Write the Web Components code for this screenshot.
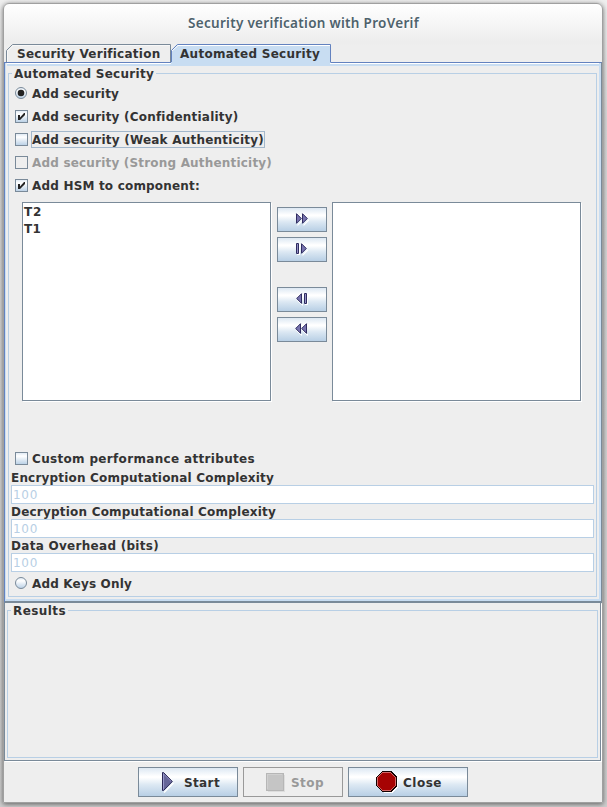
<!DOCTYPE html>
<html lang="en">
<head>
<meta charset="utf-8">
<title>Security verification with ProVerif</title>
<style>
html,body{margin:0;height:100%;overflow:hidden}
body{background:#cfcfcf;font:bold 12px/15px "DejaVu Sans",sans-serif;color:#333;--dark:#7a8a99;--light:#b8cfe5;--blue:#6382bf;--tab:#c8ddf2}
</style>
</head>
<body>
<dialog-window>
  <fit-text slot="title" w="230">Security verification with ProVerif</fit-text>
  <tab-strip slot="tabs"></tab-strip>
  <tab-panel slot="panel">
    <titled-group><fit-text slot="title" w="139">Automated Security</fit-text>
      <option-row kind="radio" checked><fit-text w="86">Add security</fit-text></option-row>
      <option-row kind="check" checked><fit-text w="205">Add security (Confidentiality)</fit-text></option-row>
      <option-row kind="check" focused><fit-text w="231">Add security (Weak Authenticity)</fit-text></option-row>
      <option-row kind="check" disabled><fit-text w="239">Add security (Strong Authenticity)</fit-text></option-row>
      <option-row kind="check" checked><fit-text w="167">Add HSM to component:</fit-text></option-row>
      <list-mover></list-mover>
      <option-row kind="check"><fit-text w="222">Custom performance attributes</fit-text></option-row>
      <value-field><fit-text slot="label" w="262">Encryption Computational Complexity</fit-text><fit-text w="24">100</fit-text></value-field>
      <value-field><fit-text slot="label" w="264">Decryption Computational Complexity</fit-text><fit-text w="24">100</fit-text></value-field>
      <value-field><fit-text slot="label" w="147">Data Overhead (bits)</fit-text><fit-text w="24">100</fit-text></value-field>
      <option-row kind="radio"><fit-text w="99">Add Keys Only</fit-text></option-row>
    </titled-group>
  </tab-panel>
  <results-pane slot="results"><titled-group style="--up:-2px"><fit-text slot="title" w="52">Results</fit-text></titled-group></results-pane>
  <push-button slot="actions" style="--w:100px;--gap:10px;--pad:23px">
    <svg slot="icon" width="12" height="21" viewBox="0 0 12 21"><path d="M2 20.5L11.5 11" stroke="#fff" stroke-width="1.5"/><path d="M.5.5h1L10.3 9.5L1.5 18.5h-1z" fill="#666699" stroke="#2b2856"/><path d="M1.5 1.5v16" stroke="#9999cc"/><path d="M2.2 2.5L9 9.3" stroke="#8d8abf"/></svg>
    <fit-text w="35">Start</fit-text></push-button>
  <push-button slot="actions" disabled style="--w:100px;--gap:6px;--pad:22px">
    <svg slot="icon" width="19" height="19" viewBox="0 0 19 19" shape-rendering="crispEdges"><path d="M2 2h17v17H2z" fill="#ddd"/><path d="M.5.5h17v17H.5z" fill="#c5c5c5" stroke="#b6b6b6"/><path d="M1.5 16V1.5H16" fill="none" stroke="#d0d0d0"/></svg>
    <fit-text w="32">Stop</fit-text></push-button>
  <push-button slot="actions" style="--w:120px;--gap:5px;--pad:27px">
    <svg slot="icon" width="22" height="22" viewBox="0 0 22 22" shape-rendering="crispEdges"><path d="M7 22H17L22 16V8z" fill="#fff"/><path d="M6 0h9l6 6v9l-6 6H6l-6-6V6z" fill="#150000"/><path d="M6.5 1.5h8l5 5v8l-5 5h-8l-5-5v-8z" fill="#a60303" stroke="#d36a6a"/></svg>
    <fit-text w="38">Close</fit-text></push-button>
</dialog-window>

<script>
const define=(name,html,setup)=>{
  const t=document.createElement('template');t.innerHTML=html;
  customElements.define(name,class extends HTMLElement{
    connectedCallback(){
      if(this.shadowRoot)return;
      this.attachShadow({mode:'open'}).append(t.content.cloneNode(true));
      if(setup)setup(this,this.shadowRoot);
    }
  });
};

define('dialog-window',`<style>
:host{display:block;box-sizing:border-box;width:607px;height:807px;padding:3px 4px 4px 3px;background:linear-gradient(#efefef,#d8d8d8 120px,#cdcdcd)}
.frame{box-sizing:border-box;width:600px;height:800px;border:1px solid #a0a0a0;border-radius:6px 6px 0 0;background:linear-gradient(#fff,#ededed 38px,#ededed 40px,#eee 41px);box-shadow:0 1px 5px rgba(0,0,0,.55);display:flex;flex-direction:column}
header{box-sizing:border-box;height:40px;padding:0 0 4px 1px;flex:none;display:flex;align-items:center;justify-content:center;color:#4e626c;font:600 13.5px/18px "Noto Sans","Open Sans",sans-serif;text-shadow:0 1px #fff}
footer{display:flex;justify-content:center;gap:5px;padding:6px 0 0}
</style><div class="frame"><header><slot name="title"></slot></header><slot name="tabs"></slot><slot name="panel"></slot><slot name="results"></slot><footer><slot name="actions"></slot></footer></div>`);

define('tab-strip',`<style>
:host{display:grid;grid-template-columns:165px 160px;height:18px;padding-left:2px;position:relative;z-index:1}
div{position:relative;height:18px;padding-left:11px;display:flex;align-items:center}
div+div{padding-left:9px;height:21px}
svg{position:absolute;left:0;top:0}fit-text{position:relative}
div+div fit-text{top:-1px}
</style><div><svg width="165" height="18"><path d="M.5 18V6.5L6.5.5H164.5V18" fill="#eee" stroke="#7a8a99"/><path d="M1.5 18V7L7 1.5H164" fill="none" stroke="#f8f8f8"/></svg><fit-text w="142">Security Verification</fit-text></div>
<div><svg width="160" height="22"><path d="M0 22V6L6 0H160V22z" fill="#c8ddf2"/><path d="M0 0H6L0 6z" fill="#eee"/><path d="M.5 18V6.5L6.5.5H159.5V18.5" fill="none" stroke="#6382bf"/><path d="M1 7L7 1.5H159" fill="none" stroke="#fff"/><path d="M159 19.5h1" stroke="#fff"/></svg><fit-text w="139">Automated Security</fit-text></div>`);

define('tab-panel',`<style>
:host{display:block;box-sizing:border-box;height:541px;width:598px;border:1px solid var(--blue);border-right-color:var(--dark);border-bottom:2px solid var(--dark);flex:none}
div{box-sizing:border-box;height:538px;border:solid var(--tab);border-width:2px 2px 2px 1px;box-shadow:inset 1px 0 #eee;border-top:0;padding:1px 2px 2px;background:linear-gradient(#fff 1px,var(--tab) 1px,var(--tab) 3px,transparent 3px)}
</style><div><slot></slot></div>`);

define('titled-group',`<style>
:host{display:block;position:relative;box-sizing:border-box;height:100%;padding:18px 2px 0}
.line{position:absolute;inset:calc(9px + var(--up,0px)) 0 0 0;border:1px solid var(--light)}
.t{position:absolute;left:4px;top:calc(2px + var(--up,0px));padding:0 2px;background:#eee;height:15px;display:flex}
.body{position:relative}
</style><div class="line"></div><div class="t"><slot name="title"></slot></div><div class="body"><slot></slot></div>`);

define('option-row',`<style>
:host{display:flex;height:23px;align-items:center;padding-left:5px;gap:4px}
:host([disabled]){color:#999}
svg{display:block;width:13px;height:13px}
span{display:flex}
:host([focused]) span{outline:1px solid #a3b8cc;outline-offset:0}
</style><svg viewBox="0 0 13 13"><defs><linearGradient id="g" x2="0" y2="1"><stop stop-color="#dde8f3"/><stop offset=".3" stop-color="#fff"/><stop offset="1" stop-color="#b8cfe5"/></linearGradient></defs><g></g></svg><span><slot></slot></span>`,(h,r)=>{
  const on=h.hasAttribute('checked');
  r.querySelector('g').innerHTML=h.getAttribute('kind')==='radio'
   ?'<circle cx="6" cy="6" r="5.5" fill="url(#g)" stroke="#7a8a99"/>'+(on?'<circle cx="6" cy="6" r="3.3" fill="#222"/>':'')
   :`<rect x=".5" y=".5" width="12" height="12" fill="${h.hasAttribute('disabled')?'#eee':'url(#g)'}" stroke="#7a8a99"/>`+(on?'<path d="M3 5h2v2.4L9 3h1v2L5 10H3z" fill="#222"/>':'');
});

define('list-mover',`<style>
:host{display:flex;height:250px;box-sizing:border-box;padding:5px 0 0 12px;gap:6px;align-items:flex-start}
.list{box-sizing:border-box;width:249px;height:199px;border:1px solid var(--dark);background:#fff;box-shadow:1px 1px #fff;padding:0 0 0 1px}
.col+.list{margin-left:-1px}
.list div{height:17px;display:flex;align-items:center}
.col{display:flex;flex-direction:column;gap:5px;padding-top:5px;width:50px}
push-button{--w:50px;--h:25px;--pad:15px;--gap:0}
.gap{margin-top:20px}
</style><div class="list"><div><fit-text w="17">T2</fit-text></div><div><fit-text w="16">T1</fit-text></div></div><div class="col"></div><div class="list"></div>`,(h,r)=>{
  const tri=x=>`<path d="M${x+1.5} 12.3L${x+6.8} 7" stroke="#fff" stroke-width="1.2"/><path d="M${x+.5} .7V10.3L${x+5.3} 5.5z" fill="#7773ae" stroke="#2f2c60"/>`;
  const lt=x=>`<path d="M${x+1.5} 7.5L${x+6.5} 12.3V11" fill="none" stroke="#fff"/><path d="M${x+5.5} .7V10.3L${x+.7} 5.5z" fill="#7773ae" stroke="#2f2c60"/>`;
  const bar=x=>`<path d="M${x+1} 1h3v11h-3z" fill="#fff"/><path d="M${x+.5} .5h2v10h-2z" fill="#9290c3" stroke="#2f2c60"/>`;
  const icons=[tri(3)+tri(9),bar(3)+tri(8),lt(3)+bar(11),lt(2)+lt(8)];
  r.querySelector('.col').innerHTML=icons.map((s,i)=>`<push-button class="${i===2?'gap':''}"><svg slot="icon" width="18" height="13">${s}</svg></push-button>`).join('');
});

define('value-field',`<style>
:host{display:block;padding-left:1px}
.l{height:15px;display:flex}
.v{box-sizing:border-box;height:19px;width:583px;border:1px solid var(--light);background:#fff;color:var(--light);font-weight:400;display:flex;align-items:center;padding-left:1px}
</style><div class="l"><slot name="label"></slot></div><div class="v"><slot></slot></div>`);

define('results-pane',`<style>
:host{display:block;box-sizing:border-box;width:597px;height:158px;border:1px solid var(--dark);border-top:0;padding:0 2px 2px;box-shadow:1px 1px #fff;flex:none}
</style><slot></slot>`);

define('push-button',`<style>
:host{display:flex;box-sizing:border-box;width:var(--w);height:var(--h,30px);border:1px solid var(--dark);background:linear-gradient(#dde8f3,#fff 30%,#fff 34%,#dce8f3 60%,#b8cfe5);align-items:center;padding-left:var(--pad);gap:var(--gap)}
:host([disabled]){background:#eee;border-color:#999;color:#999}
</style><slot name="icon"></slot><slot></slot>`);

/* Spreads its letters so that a label takes exactly w pixels. */
define('fit-text',`<style>:host{display:block;white-space:nowrap;width:max-content;padding-top:1px;margin-bottom:-1px}span{display:block;width:max-content}</style><span><slot></slot></span>`,(h,r)=>{
  const w=+h.getAttribute('w'),s=r.querySelector('span');
  const fit=()=>{s.style.letterSpacing='0';const n=h.textContent.length,d=w+1-s.getBoundingClientRect().width;s.style.letterSpacing=d/n+'px';};
  fit();document.fonts.ready.then(fit);
});
</script>
</body>
</html>
